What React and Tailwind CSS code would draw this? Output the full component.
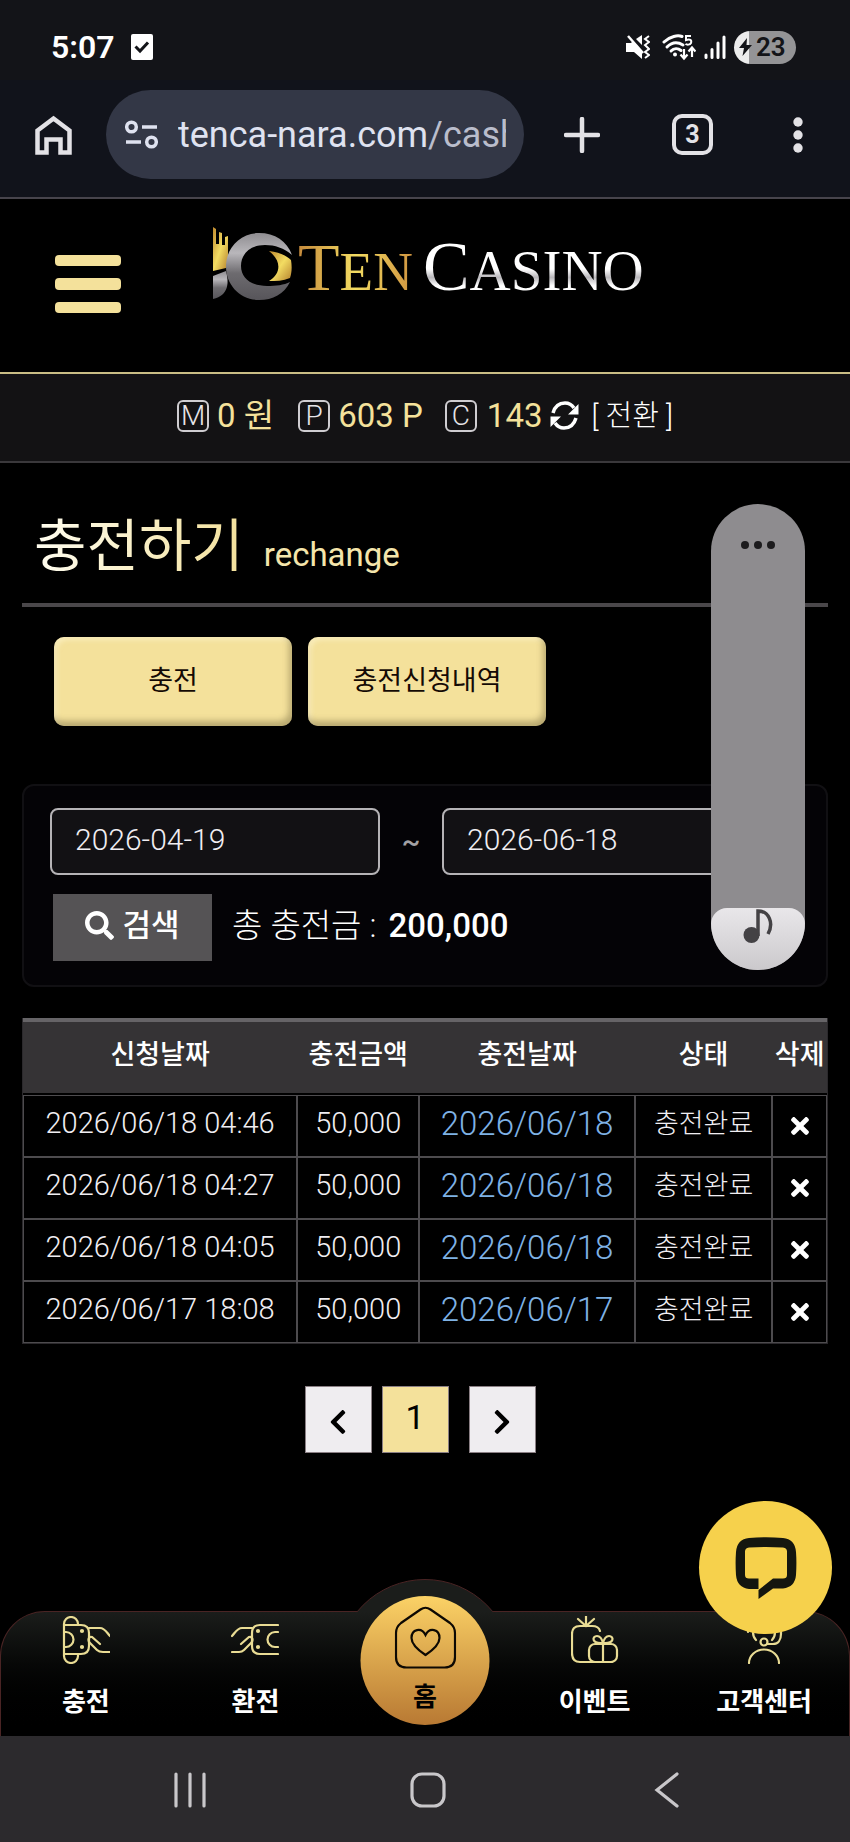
import { FaChevronLeft, FaChevronRight, FaSearch, FaTimes } from 'react-icons/fa';

const rows = [
    { id: 1, requested: '2026/06/18 04:46', amount: '50,000', charged: '2026/06/18', status: '충전완료' },
    { id: 2, requested: '2026/06/18 04:27', amount: '50,000', charged: '2026/06/18', status: '충전완료' },
    { id: 3, requested: '2026/06/18 04:05', amount: '50,000', charged: '2026/06/18', status: '충전완료' },
    { id: 4, requested: '2026/06/17 18:08', amount: '50,000', charged: '2026/06/17', status: '충전완료' },
];

function StatusBar() {
    return (
        <div className="flex h-20 items-center justify-between bg-[#131418] pl-[51px] pr-[54px] pt-[14px] text-white">
            <div className="flex items-center gap-4">
                <span className="text-[32px] font-semibold leading-8">5:07</span>
                <svg className="h-[26px] w-[22px]" viewBox="0 0 22 26">
                    <rect width="22" height="26" rx="2" fill="#fff" />
                    <path d="M4.500 12.500l4.500 4.500 8-8.500" fill="none" stroke="#131418" strokeWidth="3" />
                </svg>
            </div>
            <div className="flex items-center gap-2">
                <svg className="h-6 w-6" viewBox="0 0 24 24">
                    <path d="M0 8h5l2-2 9 10v8l-8-7H0zM10 4l6-4v10z" fill="#fff" />
                    <path d="M2 1l15 17" stroke="#fff" strokeWidth="2.500" />
                    <path d="M23 1l-4 3 4 3-4 3 4 4-4 3 4 3-4 3" fill="none" stroke="#fff" strokeWidth="2" />
                </svg>
                <svg className="ml-1 h-7 w-[34px]" viewBox="0 0 34 28">
                    <g fill="none" stroke="#fff" strokeWidth="3" strokeLinecap="round">
                        <path d="M2 9C8 3 16 2 20 3.500" />
                        <path d="M5 14c5-5 11-5 16-2" />
                        <path d="M9 18c3-3 7-3 10-.5" />
                    </g>
                    <circle cx="13" cy="21.500" r="2" fill="#fff" />
                    <path d="M29 3h-5v4c4-1.500 6 0 5 3-1 2-4 2-5.500 1" fill="none" stroke="#fff" strokeWidth="2" />
                    <path d="M22 16v9M18.500 21.500L22 25.500l3.500-4M30 24v-9M26.500 18.500l3.500-4 3.500 4" fill="none" stroke="#fff" strokeWidth="2.200" />
                </svg>
                <svg className="h-6 w-[22px]" viewBox="0 0 22 24">
                    <path d="M2 20v2.500M8 14.500v8M14 8v14.500M20 2v20.500" stroke="#fff" strokeWidth="3" strokeLinecap="round" />
                </svg>
                <div className="flex h-[33px] w-[62px] items-center rounded-full bg-gradient-to-r from-[#ececec] from-25% to-[#949496] to-25% pl-[5px] text-[#131418]">
                    <svg className="h-[18px] w-[13px]" viewBox="0 0 13 18">
                        <path d="M8 0L0 10h5L3.500 18 13 7H7.500z" fill="#131418" />
                    </svg>
                    <span className="ml-1 text-[26px] font-semibold leading-7">23</span>
                </div>
            </div>
        </div>
    );
}

function BrowserBar() {
    return (
        <div className="flex items-center border-b-2 border-[#47444c] bg-[#11131b] pb-[18px] pl-[35px] pr-[47px] pt-[10px]">
            <button type="button" aria-label="홈페이지">
                <svg className="h-10 w-[37px]" viewBox="0 0 37 40">
                    <path d="M2.500 37.500v-22l16-12 16 12v22h-9v-13h-14v13z" fill="none" stroke="#e3e2e6" strokeWidth="4.500" />
                </svg>
            </button>
            <div className="ml-[34px] flex h-[89px] min-w-0 flex-1 items-center rounded-full bg-[#333746] pl-[19px] pr-[18px]">
                <svg className="h-[29px] w-[33px] shrink-0" viewBox="0 0 33 29">
                    <g fill="none" stroke="#dfe2f0" strokeWidth="3.500">
                        <circle cx="6.500" cy="7" r="4.800" />
                        <path d="M17 7h15M1 22h15" />
                        <circle cx="26.500" cy="22" r="4.800" />
                    </g>
                </svg>
                <span className="ml-5 overflow-hidden whitespace-nowrap text-[36px] leading-[44px] text-[#dfe2f0]">
                    tenca-nara.com<span className="text-[#babdcc]">/cash</span>
                </span>
            </div>
            <button type="button" aria-label="새 탭" className="ml-10">
                <svg className="h-9 w-9" viewBox="0 0 36 36">
                    <path d="M18 2v32M2 18h32" stroke="#e3e2e6" strokeWidth="4.500" strokeLinecap="round" />
                </svg>
            </button>
            <button
                type="button"
                className="ml-[72px] flex h-[41px] w-[41px] items-center justify-center rounded-[10px] border-4 border-[#e3e2e6] text-[25px] font-bold leading-7 text-[#e3e2e6]"
            >
                3
            </button>
            <button type="button" aria-label="메뉴" className="ml-20">
                <svg className="h-9 w-[10px]" viewBox="0 0 10 36">
                    <g fill="#e3e2e6">
                        <circle cx="5" cy="5" r="4.700" />
                        <circle cx="5" cy="18" r="4.700" />
                        <circle cx="5" cy="31" r="4.700" />
                    </g>
                </svg>
            </button>
        </div>
    );
}

function LogoMark() {
    return (
        <svg className="h-[74px] w-[79px]" viewBox="0 0 79 74">
            <defs>
                <linearGradient id="silver" x1="0" y1="0" x2="0" y2="1">
                    <stop offset="0" stopColor="#8f8d91" />
                    <stop offset="0.3" stopColor="#b9b7bb" />
                    <stop offset="0.6" stopColor="#6d6b6f" />
                    <stop offset="1" stopColor="#57555a" />
                </linearGradient>
                <linearGradient id="gold" x1="0" y1="0" x2="1" y2="1">
                    <stop offset="0" stopColor="#c08a2e" />
                    <stop offset="0.5" stopColor="#f3dc62" />
                    <stop offset="1" stopColor="#b5822f" />
                </linearGradient>
            </defs>
            <path d="M0 0l3 2v15h3V5l3 1v12h3V10l3-1v23L13 41 0 44z" fill="url(#gold)" />
            <path d="M0 49l13-5c3 12 3 24-13 28z" fill="url(#silver)" />
            <path
                d="M79 28C74 14 62 6 46 6 27 6 13 21 13 39.500S27 73 46 73c14 0 25-6 31-18-6 3-14 4-23 4-16 0-26-8-26-20s9-21 24-21c10 0 19 3 27 10z"
                fill="url(#silver)"
            />
            <path d="M56 24c9 1 17 4 22 9 1 6 1 12-1 18-7 3-14 3-21 3 12-7 13-20 0-30z" fill="url(#gold)" />
        </svg>
    );
}

function SiteHeader() {
    return (
        <header className="flex h-[175px] items-start border-b-2 border-[#c9bd85] bg-black pl-[55px]">
            <button type="button" aria-label="전체 메뉴" className="mt-14 flex w-[66px] flex-col gap-3">
                <span className="h-[11px] rounded-sm bg-[#f4e19b]" />
                <span className="h-[12px] rounded-sm bg-[#f4e19b]" />
                <span className="h-[11px] rounded-sm bg-[#f4e19b]" />
            </button>
            <a href="/" className="ml-[92px] mt-7 flex items-start whitespace-nowrap font-['Liberation_Serif',serif] leading-[80px]">
                <LogoMark />
                <span className="ml-[6px] bg-gradient-to-r from-[#c58a3c] via-[#f3dc62] to-[#cf9440] bg-clip-text text-[68px] text-transparent">
                    T<span className="text-[55px]">EN</span>
                </span>
                <span className="ml-[10px] bg-gradient-to-b from-white from-50% via-[#b9b7bb] via-60% to-white to-70% bg-clip-text text-[70px] text-transparent">
                    C<span className="text-[57px]">ASINO</span>
                </span>
            </a>
        </header>
    );
}

function Badge({ children }) {
    return (
        <span className="flex h-8 w-8 items-center justify-center rounded-md border-2 border-[#cfcdd1] text-[28px] font-light leading-7 text-[#e6e4e8]">
            {children}
        </span>
    );
}

function BalanceBar() {
    return (
        <div className="flex h-[89px] items-center justify-center whitespace-nowrap border-b-2 border-[#3a383b] bg-[#131214] pb-1 text-[33px] leading-10 text-[#f4e19b]">
            <Badge>M</Badge>
            <span className="ml-2">0 원</span>
            <span className="ml-6"><Badge>P</Badge></span>
            <span className="ml-2">603 P</span>
            <span className="ml-[22px]"><Badge>C</Badge></span>
            <span className="ml-[10px]">143</span>
            <button type="button" aria-label="새로고침" className="ml-2">
                <svg className="h-[29px] w-[29px]" viewBox="0 0 29 29">
                    <path d="M3 12C5 5 10 2 15 2c4 0 7 2 9 5M26 17c-2 7-7 10-12 10-4 0-7-2-9-5" fill="none" stroke="#fff" strokeWidth="3.500" />
                    <path d="M28.500 3v10.500H18zM.5 26V15.500H11z" fill="#fff" />
                </svg>
            </button>
            <button type="button" className="ml-3 text-[29px] font-light text-white">[ 전환 ]</button>
        </div>
    );
}

function VolumeSlider() {
    return (
        <div className="absolute right-[45px] top-[504px] flex h-[466px] w-[94px] flex-col items-center justify-between overflow-hidden rounded-full bg-[#8e8c8f]">
            <svg className="mt-[36px] h-[10px] w-9" viewBox="0 0 36 10">
                <g fill="#1c1b1d">
                    <circle cx="5" cy="5" r="4" />
                    <circle cx="18" cy="5" r="4" />
                    <circle cx="31" cy="5" r="4" />
                </g>
            </svg>
            <div className="flex h-[62px] w-full justify-center rounded-t-2xl bg-gradient-to-b from-[#e9e7ea] to-[#cbc9cc]">
                <svg className="mt-px h-[35px] w-[30px]" viewBox="0 0 30 35">
                    <circle cx="8.500" cy="26" r="8" fill="#444245" />
                    <path d="M15 27V2c11 0 16 12 10 23" fill="none" stroke="#444245" strokeWidth="3.500" />
                </svg>
            </div>
            <input
                type="range"
                aria-label="미디어 음량"
                defaultValue="13"
                className="absolute inset-0 h-full w-full opacity-0 [writing-mode:vertical-lr]"
            />
        </div>
    );
}

function SearchPanel() {
    const field =
        'h-[67px] w-[330px] rounded-lg border-2 border-[#b5b3b6] bg-[#121114] pb-1 pl-[23px] text-[30px] font-light text-[#f0eef2]';

    return (
        <form
            className="mt-[58px] rounded-xl border-2 border-[#111013] bg-[#040306] px-[26px] pb-6 pt-[22px]"
            onSubmit={(e) => e.preventDefault()}
        >
            <div className="flex items-center">
                <input type="text" aria-label="시작일" defaultValue="2026-04-19" className={field} />
                <span className="w-[62px] text-center text-[28px] font-medium text-[#a3a1a4]">~</span>
                <input type="text" aria-label="종료일" defaultValue="2026-06-18" className={field} />
            </div>
            <div className="ml-[3px] mt-[19px] flex items-center text-white">
                <button
                    type="submit"
                    className="flex h-[67px] w-[159px] items-center justify-center gap-2 bg-[#555355] pb-1 text-[31px] font-medium leading-10"
                >
                    <FaSearch className="h-[29px] w-[29px]" />
                    검색
                </button>
                <p className="ml-5 pb-1 text-[33px] font-light leading-10">
                    총 충전금 : <span className="ml-1 font-medium">200,000</span>
                </p>
            </div>
        </form>
    );
}

function HistoryTable() {
    const cell = 'h-[62px] border border-[#4d4b4e] p-0 pb-1';

    return (
        <table className="mt-[31px] w-full table-fixed border-separate border-spacing-0 whitespace-nowrap border border-t-0 border-[#2b292c] text-center text-[29px] font-light text-[#f0eef2]">
            <colgroup>
                <col className="w-[34.1%]" />
                <col className="w-[15.2%]" />
                <col className="w-[26.8%]" />
                <col className="w-[17.1%]" />
                <col className="w-[6.8%]" />
            </colgroup>
            <thead>
                <tr className="bg-[#353335] text-[27px] text-white">
                    {['신청날짜', '충전금액', '충전날짜', '상태', '삭제'].map((title) => (
                        <th key={title} className="h-[77px] border-b-2 border-t-4 border-b-black border-t-[#666467] p-0 pb-1 font-medium">
                            {title}
                        </th>
                    ))}
                </tr>
            </thead>
            <tbody>
                {rows.map((row) => (
                    <tr key={row.id}>
                        <td className={cell}>{row.requested}</td>
                        <td className={cell}>{row.amount}</td>
                        <td className={cell}>
                            <a href="#" className="text-[33px] text-[#7fb2e5]">{row.charged}</a>
                        </td>
                        <td className={cell}>
                            <span className="text-[27px]">{row.status}</span>
                        </td>
                        <td className="h-[62px] border border-[#4d4b4e] p-0">
                            <button type="button" aria-label="삭제" className="block w-full">
                                <FaTimes className="mx-auto h-[26px] w-[26px] text-white" />
                            </button>
                        </td>
                    </tr>
                ))}
            </tbody>
        </table>
    );
}

function Pagination() {
    const box = 'flex h-[67px] w-[67px] items-center justify-center border border-[#8a7f84] text-black';

    return (
        <nav className="mt-[42px] flex justify-center pr-[10px]">
            <button type="button" aria-label="이전" className={`${box} bg-[#efedf0]`}>
                <FaChevronLeft className="mt-1 h-7 w-7" />
            </button>
            <button type="button" className={`${box} ml-[10px] bg-[#f4e19b] pb-1 text-[34px]`}>
                1
            </button>
            <button type="button" aria-label="다음" className={`${box} ml-5 bg-[#efedf0]`}>
                <FaChevronRight className="mt-1 h-7 w-7" />
            </button>
        </nav>
    );
}

const icons = {
    charge: (
        <>
            <path d="M2 40V8a7 7 0 0 1 14 0v1M2 38v2a7 7 0 0 0 14 0v-2" />
            <path d="M2 9h17q8 0 8 8v13q0 8-8 8H2M2 16h2a7.500 7.500 0 0 1 0 15H2" />
            <path d="M27 12h11c5 0 7 5 10 8M38 28l-8-7c-3-1-5 3-2 6l7 7q2 2 6 2h7" />
            <circle cx="20" cy="15" r="1" />
            <circle cx="20" cy="31" r="1" />
        </>
    ),
    withdraw: (
        <>
            <path d="M47 9H29q-8 0-8 8v13q0 8 8 8h18M47 16h-3a7.500 7.500 0 0 0 0 15h3" />
            <path d="M21 12H11c-5 0-7 5-10 8M10 28l8-7c3-1 5 3 2 6l-7 7q-2 2-5 2H1" />
            <circle cx="27" cy="15" r="1" />
            <circle cx="27" cy="31" r="1" />
        </>
    ),
    event: (
        <>
            <path d="M15 0v10M7 3l8 7 8-7M29 15c-1-4-4-5-8-5H9q-8 0-8 8v19q0 9 8 9h32" />
            <rect x="18" y="28" width="28" height="18" rx="6" />
            <path d="M32 28v18M32 27c-12 1-11-7-6-7 3 0 5 3 6 7 1-4 3-7 6-7 5 0 6 8-6 7" />
        </>
    ),
    support: (
        <>
            <path d="M9 47a15 13.500 0 0 1 30 0M13 16c0 4 1 6 3 8M35 16c0 4-1 6-3 8M27 28h6c5 0 8-4 8-10V12M8 16V12a16 12 0 0 1 32 0" />
            <circle cx="24" cy="26" r="3.500" />
        </>
    ),
};

function NavItem({ icon, label }) {
    return (
        <a href="#" className="flex flex-1 flex-col items-center whitespace-nowrap text-[26px] font-bold leading-8 text-white">
            <svg className="mb-[22px] h-12 w-12" viewBox="0 0 48 48" fill="none" stroke="#e9dc94" strokeWidth="2.200" strokeLinecap="round">
                {icons[icon]}
            </svg>
            {label}
        </a>
    );
}

function BottomNav() {
    return (
        <nav className="relative">
            <div className="flex h-[125px] rounded-t-[45px] border border-b-0 border-[#4a2424] bg-gradient-to-b from-[#1b1d1b] to-black pt-1">
                <NavItem icon="charge" label="충전" />
                <NavItem icon="withdraw" label="환전" />
                <span className="flex-1" />
                <NavItem icon="event" label="이벤트" />
                <NavItem icon="support" label="고객센터" />
            </div>

            {/* raised bump behind the home button */}
            <div className="absolute -top-8 left-1/2 h-[33px] w-44 -translate-x-1/2 overflow-hidden">
                <div className="h-44 w-44 rounded-full border border-[#4a2424] bg-[#1b1d1b]" />
            </div>
            <a
                href="#"
                className="absolute -top-[15px] left-1/2 flex h-[129px] w-[129px] -translate-x-1/2 flex-col items-center rounded-full bg-gradient-to-b from-[#fbd266] to-[#b87933] pt-[10px] text-[26px] font-bold leading-8 text-black"
            >
                <svg className="mb-3 h-[63px] w-[62px]" viewBox="0 0 62 63" fill="none" stroke="#0d0903" strokeWidth="2.200">
                    <path d="M1.500 27q0-6 5-10L26 3.500q5-3.500 10 0L55.500 17q5 4 5 10v24q0 10.500-10.500 10.500H12Q1.500 61.500 1.500 51z" />
                    <path d="M31 49C25 45 17 38 17 32c0-9 10-11 14-3 4-8 14-6 14 3 0 6-8 13-14 17z" />
                </svg>
                홈
            </a>

            <button
                type="button"
                aria-label="채팅 상담"
                className="absolute -top-[110px] right-[18px] flex h-[133px] w-[133px] items-center justify-center rounded-full bg-[#f6d14c]"
            >
                <svg className="h-[62px] w-[62px]" viewBox="0 0 62 62">
                    <path
                        fill="#14160f"
                        fillRule="evenodd"
                        d="M14 1Q31-.5 48 1 60 2 61 15q.8 11 0 23-1 12-13 13.500H38L23.500 62V52H14Q2 50.500 1 38 .2 26 1 15 2 2 14 1zM14 10.500q-4 .5-4 4V38q0 3.500 4 3.500h9.500V53L38 41.500h10q4 0 4-3.500V14.500q0-3.500-4-4-17-.8-34 0z"
                    />
                </svg>
            </button>
        </nav>
    );
}

function SystemNav() {
    return (
        <div className="flex h-[106px] items-center justify-center gap-[203px] bg-[#2c2a2d] pl-[6px] pt-[2px]">
            <button type="button" aria-label="최근 앱">
                <svg className="h-9 w-[34px]" viewBox="0 0 34 36">
                    <path d="M3 2v32M17 2v32M31 2v32" stroke="#c9c7ca" strokeWidth="3.200" strokeLinecap="round" />
                </svg>
            </button>
            <button type="button" aria-label="홈 화면">
                <svg className="h-9 w-9" viewBox="0 0 36 36">
                    <rect x="2" y="2" width="32" height="32" rx="10" fill="none" stroke="#c9c7ca" strokeWidth="3.200" />
                </svg>
            </button>
            <button type="button" aria-label="뒤로">
                <svg className="h-9 w-[34px]" viewBox="0 0 34 36">
                    <path d="M28 2L8 18l20 16" fill="none" stroke="#c9c7ca" strokeWidth="3.200" strokeLinecap="round" />
                </svg>
            </button>
        </div>
    );
}

export default function App() {
    return (
        <div className="relative flex min-h-screen flex-col bg-black font-[Roboto,'Noto_Sans_CJK_KR',sans-serif]">
            <StatusBar />
            <BrowserBar />
            <SiteHeader />
            <BalanceBar />

            <main className="flex-1 px-[22px] pb-16">
                <h1 className="flex items-baseline gap-5 border-b-4 border-[#4a474a] pb-4 pl-3 pt-[52px] leading-[64px]">
                    <span className="bg-gradient-to-r from-[#fffdf0] to-[#f4e19b] bg-clip-text text-[57px] text-transparent">
                        충전하기
                    </span>
                    <span className="text-[33px] text-[#f4e5ab]">rechange</span>
                </h1>

                <div className="mt-[30px] flex gap-4 pl-8">
                    {['충전', '충전신청내역'].map((label) => (
                        <button
                            key={label}
                            type="button"
                            className="h-[89px] w-[238px] rounded-[10px] bg-[#f4e19b] text-[27px] text-[#140a04] shadow-[inset_-3px_-5px_6px_rgba(110,100,60,0.45),inset_3px_3px_5px_rgba(255,250,220,0.5)]"
                        >
                            {label}
                        </button>
                    ))}
                </div>

                <SearchPanel />
                <HistoryTable />
                <Pagination />
            </main>

            <BottomNav />
            <SystemNav />
            <VolumeSlider />
        </div>
    );
}
